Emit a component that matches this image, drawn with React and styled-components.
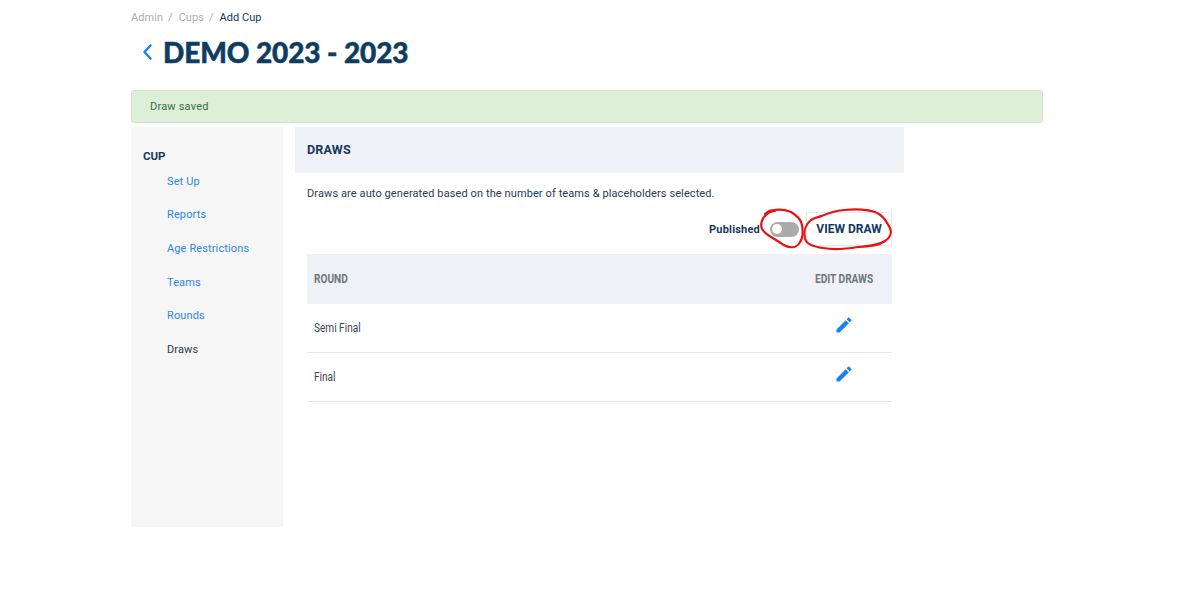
import React from 'react';
import styled, { createGlobalStyle } from 'styled-components';

const Global = createGlobalStyle`
  html, body { margin: 0; background: #fff; }
  body { font-family: Roboto, "Liberation Sans", sans-serif; font-size: 12px; color: #0f3a5f; }
  * { box-sizing: border-box; }
`;
const Page = styled.div`
  width: 912px; margin-left: 131px; padding-top: 10px; height: 602px; overflow: hidden;
`;
const Crumbs = styled.nav`
  display: flex; height: 15px; align-items: center; font-size: 11px; letter-spacing: .05px; color: #adadad;
`;
const Crumb = styled.span`
  margin-right: ${p => p.$gap || 0}px;
  color: ${p => p.$current ? '#123a60' : '#adadad'};
`;
const TitleRow = styled.div`
  display: flex; align-items: center; height: 36px; margin-top: 9px; padding-left: 12px; gap: 11px;
`;
const Title = styled.h1`
  margin: 0; font-family: Lato, sans-serif; font-weight: 900; font-size: 28px; letter-spacing: -.1px; color: #0e3c62; line-height: 36px; white-space: nowrap;
  -webkit-text-stroke: .5px #0e3c62;
`;
const Alert = styled.div`
  margin-top: 20px; height: 33px; display: flex; align-items: center; padding-left: 18px;
  background: #deefd8; border: 1px solid #d0e6c9; border-radius: 3px; color: #3c6b4b; font-size: 11px; letter-spacing: .2px;
`;
const Columns = styled.div`
  display: flex; gap: 12px; margin-top: 4px; align-items: flex-start;
`;
const Sidebar = styled.aside`
  width: 152px; height: 400px; background: #f6f6f7; padding: 22px 12px 0;
`;
const SideHead = styled.div`
  font-size: 11.5px; font-weight: 700; color: #123a60; line-height: 14px; margin-bottom: 1.6px;
`;
const SideList = styled.div`
  display: flex; flex-direction: column; padding-left: 24px;
`;
const SideItem = styled.a`
  height: 33.6px; display: flex; align-items: center; font-size: 11px; letter-spacing: .12px;
  color: ${p => p.$active ? '#2b3a4a' : '#2d86e8'};
`;
const Main = styled.main`
  width: 609px; position: relative;
`;
const Head = styled.div`
  height: 46px; background: #f0f1f6; display: flex; align-items: center; padding: 0 0 2px 12px;
  font-size: 12.5px; font-weight: 700; color: #123a60; letter-spacing: .2px;
`;
const Body = styled.div`
  padding: 0 12px;
`;
const Intro = styled.p`
  margin: 14px 0 0; line-height: 14px; font-size: 11px; letter-spacing: .1px; color: #1f3c56;
`;
const Actions = styled.div`
  display: flex; justify-content: flex-end; align-items: center; height: 36px; margin-top: 10px;
`;
const PubLabel = styled.span`
  font-size: 11px; font-weight: 700; color: #123a60; letter-spacing: .2px;
`;
const Toggle = styled.span`
  width: 29px; height: 15px; border-radius: 8px; background: #ababab; margin-left: 10px; position: relative; display: block;
  &::after { content: ''; position: absolute; left: 2px; top: 2.5px; width: 10px; height: 10px; border-radius: 50%; background: #fff; }
`;
const ViewBtn = styled.button`
  width: 86px; height: 34px; margin-left: 7px; background: #fff; border: 1px solid #e8e9ef; padding: 0;
  font-family: Roboto, sans-serif; font-size: 12px; font-weight: 700; color: #123a60; letter-spacing: 0;
`;
const Table = styled.div`
  margin-top: 7px; display: flex; flex-direction: column;
`;
const HeadRow = styled.div`
  height: 50px; background: #f0f1f6; display: flex; align-items: center; justify-content: space-between; padding: 0 19px 0 7px;
`;
const HeadCell = styled.span`
  font-size: 12px; font-weight: 700; color: #6b7680; display: inline-block;
  transform: scaleX(.84); transform-origin: ${p => p.$right ? 'right' : 'left'} center; white-space: nowrap;
`;
const Row = styled.div`
  height: 49px; display: flex; align-items: center; justify-content: space-between; padding: 0 38px 1px 7px;
  border-bottom: 1px solid #e7e7e9;
`;
const RowName = styled.span`
  font-size: 12px; color: #3b4652; display: inline-block; transform: scaleX(.84); transform-origin: left center;
`;
const PencilIcon = styled.svg`
  width: 20px; height: 20px; margin-bottom: 5px; fill: #1a82ee;
`;
const Scribble = styled.svg`
  position: absolute; left: 0; top: 0; width: 609px; height: 300px; pointer-events: none; overflow: visible;
`;
const Pencil = () => (
  <PencilIcon viewBox="0 0 24 24">
    <path d="M3 17.25V21h3.75L17.81 9.94l-3.75-3.75L3 17.25zM20.71 7.04a1 1 0 0 0 0-1.41l-2.34-2.34a1 1 0 0 0-1.41 0l-1.83 1.83 3.75 3.75 1.83-1.83z" />
  </PencilIcon>
);

export default function App() {
  return (
    <Page>
      <Global />
      <Crumbs>
        <Crumb $gap={5}>Admin</Crumb><Crumb $gap={6}>/</Crumb>
        <Crumb $gap={5}>Cups</Crumb><Crumb $gap={6}>/</Crumb>
        <Crumb $current>Add Cup</Crumb>
      </Crumbs>
      <TitleRow>
        <svg width="9" height="16" viewBox="0 0 9 16" fill="none" stroke="#1a82ee" strokeWidth="2.4" strokeLinecap="round" strokeLinejoin="round"><path d="M7.5 1.5 1.5 8l6 6.5" /></svg>
        <Title>DEMO 2023 - 2023</Title>
      </TitleRow>
      <Alert>Draw saved</Alert>
      <Columns>
        <Sidebar>
          <SideHead>CUP</SideHead>
          <SideList>
            <SideItem>Set Up</SideItem>
            <SideItem>Reports</SideItem>
            <SideItem>Age Restrictions</SideItem>
            <SideItem>Teams</SideItem>
            <SideItem>Rounds</SideItem>
            <SideItem $active>Draws</SideItem>
          </SideList>
        </Sidebar>
        <Main>
          <Head>DRAWS</Head>
          <Body>
            <Intro>Draws are auto generated based on the number of teams &amp; placeholders selected.</Intro>
            <Actions>
              <PubLabel>Published</PubLabel>
              <Toggle />
              <ViewBtn>VIEW DRAW</ViewBtn>
            </Actions>
            <Table>
              <HeadRow><HeadCell>ROUND</HeadCell><HeadCell $right>EDIT DRAWS</HeadCell></HeadRow>
              <Row><RowName>Semi Final</RowName><Pencil /></Row>
              <Row><RowName>Final</RowName><Pencil /></Row>
            </Table>
          </Body>
          <Scribble viewBox="0 0 609 300" fill="none" stroke="#ee1010" strokeWidth="2.2" strokeLinecap="round" strokeLinejoin="round">
            <path d="M470 87c3-3 5-4 9-4 6-1 12 0 17 2 5 3 10 7 11 13 1 6 1 13-2 17-2 4-6 6-10 5-5 0-9-4-14-7-5-3-11-6-14-11-2-5 0-11 5-15 2-2 5-3 8-3" />
            <path d="M524 90c7-3 15-6 25-7 10-1 22-1 31 2 8 3 11 9 15 16 2 5 0 10-5 13-7 5-17 5-27 6-12 2-25 3-35 1-8-1-16-3-18-9-2-8 1-15 6-19 5-3 8-3 10-4" />
          </Scribble>
        </Main>
      </Columns>
    </Page>
  );
}
